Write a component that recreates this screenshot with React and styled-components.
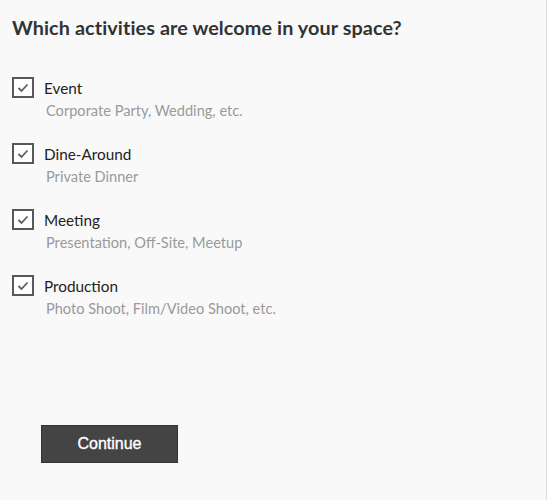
import React from "react";
import styled, { createGlobalStyle } from "styled-components";

const Global = createGlobalStyle`
  html, body { margin: 0; padding: 0; background: #f9f9f9; }
  #root { height: 500px; }
`;

const Page = styled.div`
  box-sizing: border-box;
  width: 547px;
  height: 500px;
  background: #f9f9f9;
  border-right: 1px solid #dcdcdc;
  padding: 14px 0 0 12px;
  display: flex;
  flex-direction: column;
`;

const Title = styled.h1`
  margin: 0;
  font-family: Lato, "Open Sans", sans-serif;
  font-weight: 700;
  font-size: 19.8px;
  line-height: 26px;
  color: #333;
  letter-spacing: 0.1px;
`;

const List = styled.div`
  display: flex;
  flex-direction: column;
  gap: 22px;
  margin-top: 37px;
`;

const Item = styled.label`
  display: grid;
  grid-template-columns: 22px 1fr;
  column-gap: 10px;
  row-gap: 3px;
  align-items: center;
`;

const Box = styled.span`
  box-sizing: border-box;
  width: 22px;
  height: 21px;
  border: 2px solid #585858;
  background: #fff;
  display: flex;
  align-items: center;
  justify-content: center;
`;

const Label = styled.span`
  font-family: Lato, "Open Sans", sans-serif;
  font-size: 15.3px;
  color: #222;
  line-height: 20px;
`;

const Sub = styled.span`
  grid-column: 2;
  padding-left: 2px;
  font-family: Lato, "Open Sans", sans-serif;
  font-size: 14.6px;
  color: #9a9a9a;
  line-height: 20px;
`;

const Button = styled.button`
  margin: 106px 0 0 29px;
  width: 137px;
  height: 38px;
  background: #444;
  border: 1px solid #333;
  color: #fff;
  font-family: "Liberation Sans", Arial, sans-serif;
  font-size: 16px;
  font-weight: 400;
  -webkit-text-stroke: 0.35px #fff;
  cursor: pointer;
`;

const Check = () => (
  <svg width="12" height="10" viewBox="0 0 12 10">
    <path d="M1.5 5 L4.5 8 L10.5 1.5" fill="none" stroke="#5e5e5e" strokeWidth="1.8" />
  </svg>
);

const items = [
  ["Event", "Corporate Party, Wedding, etc."],
  ["Dine-Around", "Private Dinner"],
  ["Meeting", "Presentation, Off-Site, Meetup"],
  ["Production", "Photo Shoot, Film/Video Shoot, etc."],
];

export default function App() {
  return (
    <>
      <Global />
      <Page>
        <Title>Which activities are welcome in your space?</Title>
        <List>
          {items.map(([l, s]) => (
            <Item key={l}>
              <Box><Check /></Box>
              <Label>{l}</Label>
              <Sub>{s}</Sub>
            </Item>
          ))}
        </List>
        <Button>Continue</Button>
      </Page>
    </>
  );
}
